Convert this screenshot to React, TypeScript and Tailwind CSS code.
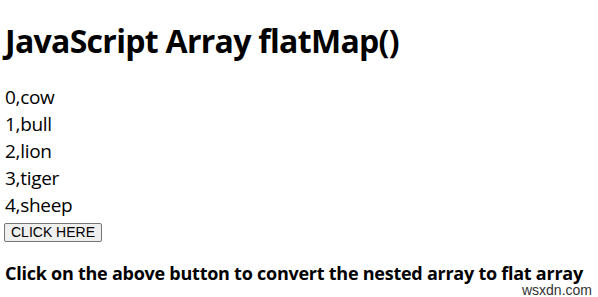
export default function App() {
  const rows = ['0,cow', '1,bull', '2,lion', '3,tiger', '4,sheep']
  return (
    <div className="relative w-[598px] h-[297px] bg-white text-black overflow-hidden px-[5px] font-['Open_Sans',sans-serif]">
      <h1 className="mt-[20px] text-[32px] leading-[42px] font-bold tracking-[-0.7px]">JavaScript Array flatMap()</h1>
      <div className="mt-[22px] text-[19px] leading-[27px] font-medium tracking-[-0.3px]">
        {rows.map((r) => (
          <div key={r}>{r}</div>
        ))}
      </div>
      <button className="mt-[-5px] ml-[-1px] h-[19px] px-[6px] border border-[#767676] rounded-[2px] bg-[#efefef] text-[14px] leading-none font-['Liberation_Sans',sans-serif]">
        CLICK HERE
      </button>
      <p className="mt-[20px] text-[18px] leading-[20px] font-bold tracking-[-0.25px]">
        Click on the above button to convert the nested array to flat array
      </p>
      <span className="absolute right-[6px] bottom-[2px] text-[14px] leading-[10px] text-[#333] font-['Liberation_Sans',sans-serif]">wsxdn.com</span>
    </div>
  )
}
